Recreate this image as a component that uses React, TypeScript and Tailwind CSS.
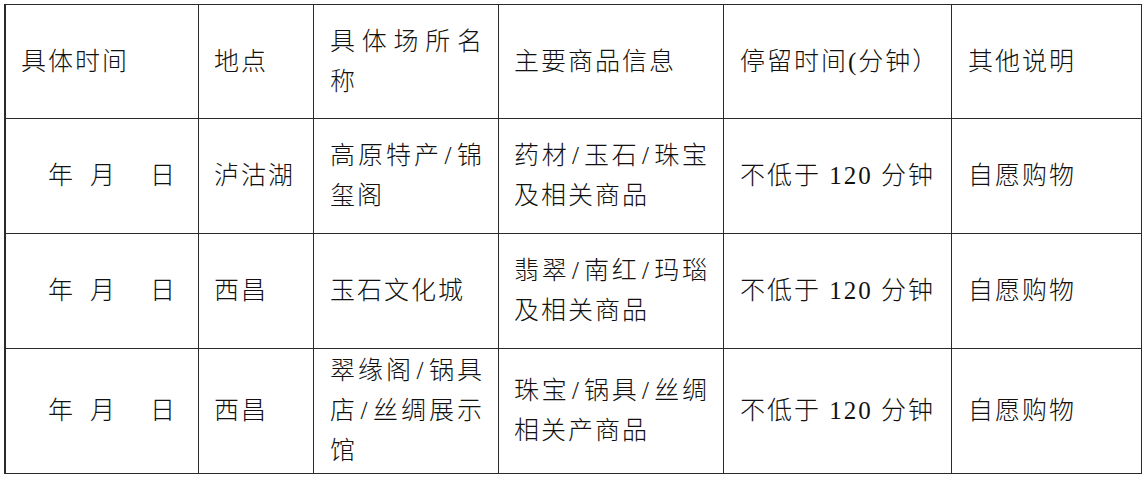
const cell =
  "flex flex-col justify-center border-r border-b border-[#2a2a2a] pl-4 pr-4 leading-[40px]";

function Spread({ text }: { text: string }) {
  return (
    <div className="flex justify-between tracking-normal">
      {[...text].map((c, i) => (
        <span key={i} className={c === "/" ? "w-[12px] text-center" : ""}>
          {c}
        </span>
      ))}
    </div>
  );
}

function DateCell() {
  return (
    <div className={cell + " pl-[15px]"}>
      <div className="flex tracking-normal">
        <span className="ml-[27px]">年</span>
        <span className="ml-[17px]">月</span>
        <span className="ml-[35px]">日</span>
      </div>
    </div>
  );
}

function Cell({ children, className = "" }: { children: React.ReactNode; className?: string }) {
  return <div className={cell + " " + className}>{children}</div>;
}

const rows = [
  {
    place: "泸沽湖",
    shop: (
      <>
        <Spread text="高原特产/锦" />
        <div>玺阁</div>
      </>
    ),
    goods: ["药材/玉石/珠宝", "及相关商品"],
  },
  {
    place: "西昌",
    shop: <div>玉石文化城</div>,
    goods: ["翡翠/南红/玛瑙", "及相关商品"],
  },
  {
    place: "西昌",
    shop: (
      <>
        <Spread text="翠缘阁/锅具" />
        <Spread text="店/丝绸展示" />
        <div>馆</div>
      </>
    ),
    goods: ["珠宝/锅具/丝绸", "相关产商品"],
  },
];

export default function App() {
  return (
    <div className="min-h-screen bg-white p-1 text-[25px] font-light tracking-[2px] text-[#111] [font-family:'Liberation_Serif','Noto_Sans_CJK_SC',serif]">
      <div className="grid grid-cols-[193px_115px_185px_225px_228px_190px] grid-rows-[114px_115px_115px_125px] w-fit border-l-2 border-t border-[#2a2a2a]">
        <Cell className="pl-[15px]">具体时间</Cell>
        <Cell className="pl-[15px]">地点</Cell>
        <Cell>
          <Spread text="具体场所名" />
          <div>称</div>
        </Cell>
        <Cell className="pl-[15px]">主要商品信息</Cell>
        <Cell className="pr-1 whitespace-nowrap">停留时间(分钟）</Cell>
        <Cell>其他说明</Cell>

        {rows.map((r, i) => (
          <div key={i} className="contents">
            <DateCell />
            <Cell className="pl-[15px]">{r.place}</Cell>
            <Cell>{r.shop}</Cell>
            <Cell className="pl-[15px]">
              <Spread text={r.goods[0]} />
              <div>{r.goods[1]}</div>
            </Cell>
            <Cell className="pr-1 whitespace-nowrap">不低于 120 分钟</Cell>
            <Cell>自愿购物</Cell>
          </div>
        ))}
      </div>
    </div>
  );
}
